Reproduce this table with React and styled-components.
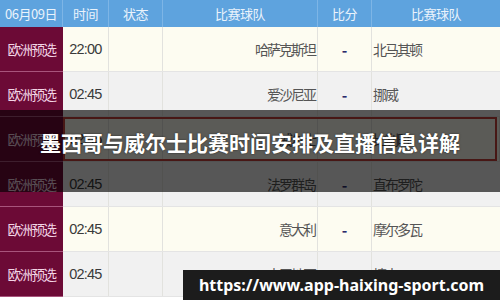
import React from 'react';
import styled, { createGlobalStyle } from 'styled-components';

const GlobalStyle = createGlobalStyle`
  html, body {
    margin: 0;
    padding: 0;
    background: #ffffff;
  }
  body {
    font-family: "Noto Sans CJK SC", "Noto Sans", sans-serif;
  }
`

const Page = styled.div`
  position: relative;
  width: 500px;
  height: 300px;
  overflow: hidden;
`

const columns = '63px 46px 54px 155px 54px 128px';

const HeaderRow = styled.div`
  display: grid;
  grid-template-columns: ${columns};
  height: 27px;
  background: #5ea3de;
`

const HeaderCell = styled.div`
  display: flex;
  align-items: center;
  justify-content: center;
  color: #eaf3fc;
  font-size: 13px;
  letter-spacing: -0.5px;
  border-right: 1px solid #7db5e6;
  &:last-child {
    border-right: none;
  }
`

const Row = styled.div`
  position: relative;
  display: grid;
  grid-template-columns: ${columns};
  height: 45px;
  background: ${(p) => (p.$cream ? '#fdfcf1' : '#f1f1f1')};
  border-bottom: 1px solid #e4e4e4;
  box-sizing: border-box;
`

const Highlight = styled.div`
  position: absolute;
  left: 63px;
  right: 3px;
  top: 0;
  bottom: 0;
  border: 2px solid #c4403c;
`

const DateCell = styled.div`
  display: flex;
  align-items: center;
  justify-content: center;
  background: #6c0a36;
  color: #f3d6e6;
  font-size: 13.5px;
  letter-spacing: -1.5px;
  border-bottom: 1px solid #a8547c;
  margin-bottom: -1px;
`

const Cell = styled.div`
  display: flex;
  align-items: center;
  justify-content: ${(p) => p.$align || 'center'};
  padding: 0 ${(p) => (p.$align === 'flex-end' ? '2px' : '0')} 0 ${(p) => (p.$align === 'flex-start' ? '1px' : '0')};
  border-right: 1px solid #e2e2de;
  color: #555555;
  font-size: 14px;
  letter-spacing: -2px;
  &:last-child {
    border-right: none;
  }
`

const Time = styled(Cell)`
  color: #3a3a3a;
  font-family: "Liberation Sans", sans-serif;
  font-size: 14.5px;
  letter-spacing: -0.8px;
`

const Score = styled(Cell)`
  color: #2a2a6a;
  font-weight: bold;
  font-size: 15px;
  letter-spacing: 0;
`

const Overlay = styled.div`
  position: absolute;
  left: 0;
  right: 0;
  top: 110px;
  height: 82px;
  background: rgba(0, 0, 0, 0.64);
  display: flex;
  align-items: center;
  justify-content: center;
  padding-bottom: 18px;
  box-sizing: border-box;
`

const Title = styled.h1`
  margin: 0;
  color: #ffffff;
  font-size: 21px;
  font-weight: bold;
  white-space: nowrap;
  text-shadow: 0 0 2px rgba(0, 0, 0, 0.6);
`

const UrlBar = styled.div`
  position: absolute;
  right: 0;
  bottom: 0;
  width: 317px;
  height: 30px;
  background: #1c1c1c;
  display: flex;
  align-items: center;
  justify-content: center;
  color: #ffffff;
  font-family: "Noto Sans", "DejaVu Sans", sans-serif;
  font-weight: bold;
  font-size: 16px;
  white-space: nowrap;
`

const matches = [
  { time: '22:00', home: '哈萨克斯坦', away: '北马其顿', cream: true },
  { time: '02:45', home: '爱沙尼亚', away: '挪威' },
  { time: '02:45', home: '威尔士', away: '比利时', cream: true, selected: true },
  { time: '02:45', home: '法罗群岛', away: '直布罗陀' },
  { time: '02:45', home: '意大利', away: '摩尔多瓦', cream: true },
  { time: '02:45', home: '克罗地亚', away: '捷克' },
]

const headers = ['06月09日', '时间', '状态', '比赛球队', '比分', '比赛球队']

function App() {
  return (
    <Page>
      <GlobalStyle />
      <HeaderRow>
        {headers.map((h, i) => (
          <HeaderCell key={i}>{h}</HeaderCell>
        ))}
      </HeaderRow>
      {matches.map((m, i) => (
        <Row key={i} $cream={m.cream}>
          <DateCell>欧洲预选</DateCell>
          <Time>{m.time}</Time>
          <Cell></Cell>
          <Cell $align="flex-end">{m.home}</Cell>
          <Score>-</Score>
          <Cell $align="flex-start">{m.away}</Cell>
          {m.selected && <Highlight />}
        </Row>
      ))}
      <Overlay>
        <Title>墨西哥与威尔士比赛时间安排及直播信息详解</Title>
      </Overlay>
      <UrlBar>https://www.app-haixing-sport.com</UrlBar>
    </Page>
  );
}

export default App;
